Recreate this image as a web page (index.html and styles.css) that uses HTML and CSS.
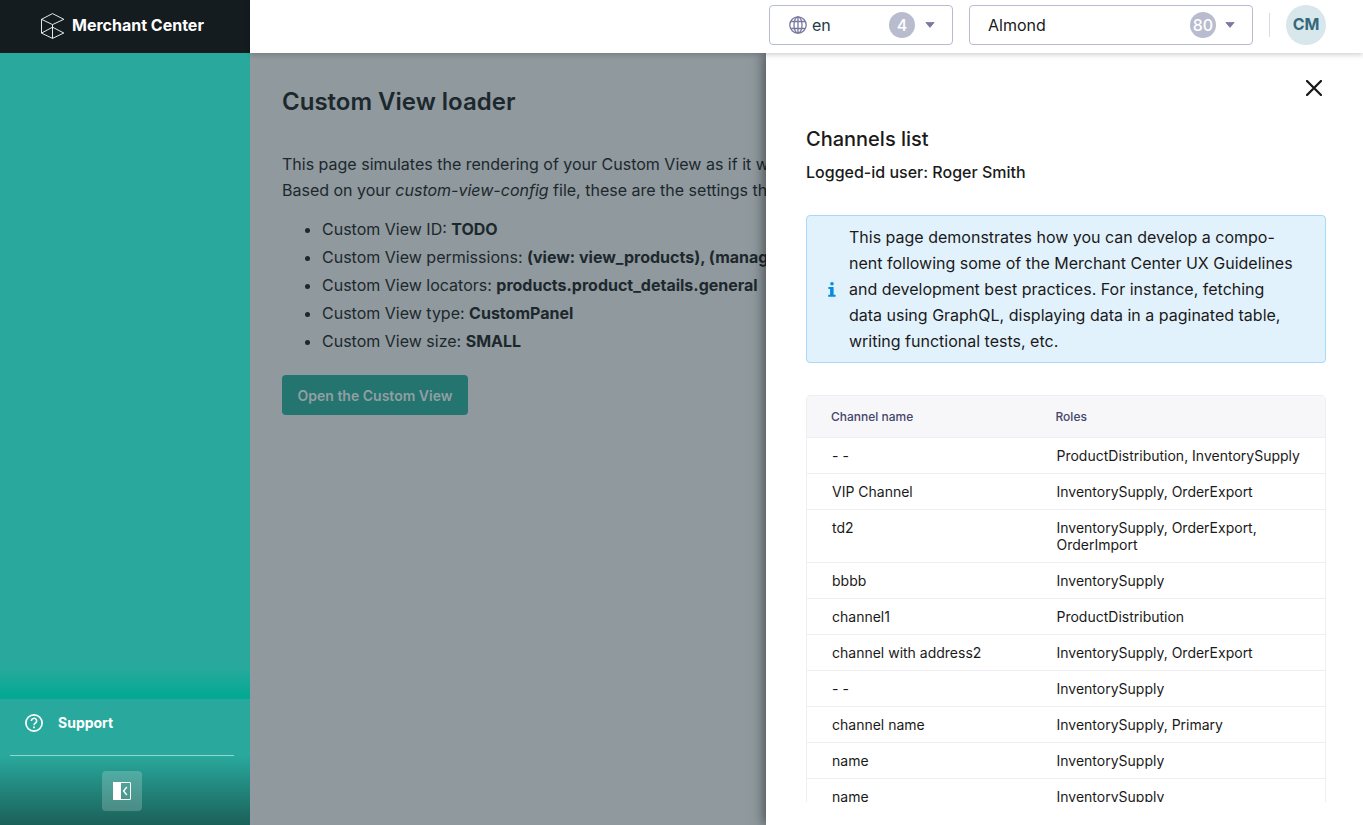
FILE: index.html
```html
<!DOCTYPE html>
<html lang="en">
<head>
<meta charset="utf-8">
<title>Merchant Center</title>
<link rel="stylesheet" href="styles.css">
</head>
<body>
<div class="app">
  <aside class="sidebar">
    <div class="brand">
      <svg class="brand-logo" width="24" height="26" viewBox="0 0 24 26" fill="none" stroke="#fff" stroke-width=".9"><path d="M11.5 .6 22.8 6.3 11.5 11.6.5 6.3zM.5 6.3v13.8L11.5 25.4 22.8 20 11.5 14.2.5 20.1M11.5 11.6v13.8"/></svg>
      <span>Merchant Center</span>
    </div>
    <nav class="nav">
      <div class="nav-shade"></div>
      <a class="support">
        <svg width="18" height="18" viewBox="0 0 18 18" fill="none" stroke="#fff" stroke-width="1.7"><circle cx="9" cy="9" r="8.1"/><path d="M6.4 7a2.6 2.6 0 1 1 3.9 2.2C9.3 9.8 9 10.2 9 11.2" stroke-width="1.5"/><path d="M9 12.6v1.6"/></svg>
        <span>Support</span>
      </a>
      <div class="collapse">
        <button class="collapse-button" aria-label="Collapse menu">
          <svg width="18" height="18" viewBox="0 0 18 18"><rect x=".5" y=".5" width="17" height="17" rx=".5" fill="none" stroke="#fff"/><path d="M0 0h8v18H0z" fill="#fff"/><path d="M13.8 5 10.6 9l3.2 4" fill="none" stroke="#fff" stroke-width="1.4"/></svg>
        </button>
      </div>
    </nav>
  </aside>
  <div class="content">
    <header class="topbar">
      <div class="select select-locale">
        <svg width="18" height="18" viewBox="0 0 18 18" fill="none" stroke="#7878a0" stroke-width="1.3"><circle cx="9" cy="9" r="8.2"/><ellipse cx="9" cy="9" rx="4" ry="8.2"/><path d="M9 .8v16.4M2 5.5h14M2 12.5h14"/></svg>
        <span class="select-value locale">en</span>
        <span class="count">4</span>
        <svg class="caret" width="10" height="6" viewBox="0 0 10 6"><path d="M.8.4h8.4L5 5.4z" fill="#7878a0" stroke="#7878a0" stroke-width=".8" stroke-linejoin="round"/></svg>
      </div>
      <div class="select select-project">
        <span class="select-value">Almond</span>
        <span class="count">80</span>
        <svg class="caret" width="10" height="6" viewBox="0 0 10 6"><path d="M.8.4h8.4L5 5.4z" fill="#7878a0" stroke="#7878a0" stroke-width=".8" stroke-linejoin="round"/></svg>
      </div>
      <div class="divider"></div>
      <div class="avatar">CM</div>
    </header>
    <div class="stage">
      <main class="page">
        <h1 class="page-title">Custom View loader</h1>
        <p class="intro">This page simulates the rendering of your Custom View as if it w<br>Based on your <em>custom-view-config</em> file, these are the settings th</p>
        <ul class="settings">
          <li>Custom View ID: <b>TODO</b></li>
          <li>Custom View permissions: <b>(view: view_products), (manag</b></li>
          <li>Custom View locators: <b>products.product_details.general</b></li>
          <li>Custom View type: <b>CustomPanel</b></li>
          <li>Custom View size: <b>SMALL</b></li>
        </ul>
        <button class="open-button">Open the Custom View</button>
      </main>
      <section class="panel">
        <div class="panel-top">
          <svg class="close" width="16" height="16" viewBox="0 0 16 16"><path d="m1 1 14 14M15 1 1 15" stroke="#1a1a1a" stroke-width="2.3" stroke-linecap="round"/></svg>
        </div>
        <div class="panel-body">
          <h2 class="panel-title">Channels list</h2>
          <h3 class="panel-subtitle">Logged-id user: Roger Smith</h3>
          <div class="notice">
            <svg class="info" width="8" height="15" viewBox="0 0 8 15" fill="#078cdf"><circle cx="4" cy="1.8" r="1.8"/><path d="M.4 5h5.2v7.8h2v2H.2v-2h1.9V7H.4z"/></svg>
            <p class="notice-text">This page demonstrates how you can develop a compo-<br>nent following some of the Merchant Center UX Guidelines<br>and development best practices. For instance, fetching<br>data using GraphQL, displaying data in a paginated table,<br>writing functional tests, etc.</p>
          </div>
          <div class="table">
            <div class="row head"><span>Channel name</span><span>Roles</span></div>
            <div class="row"><span>- -</span><span>ProductDistribution, InventorySupply</span></div>
            <div class="row"><span>VIP Channel</span><span>InventorySupply, OrderExport</span></div>
            <div class="row"><span>td2</span><span>InventorySupply, OrderExport, OrderImport</span></div>
            <div class="row"><span>bbbb</span><span>InventorySupply</span></div>
            <div class="row"><span>channel1</span><span>ProductDistribution</span></div>
            <div class="row"><span>channel with address2</span><span>InventorySupply, OrderExport</span></div>
            <div class="row"><span>- -</span><span>InventorySupply</span></div>
            <div class="row"><span>channel name</span><span>InventorySupply, Primary</span></div>
            <div class="row"><span>name</span><span>InventorySupply</span></div>
            <div class="row"><span>name</span><span>InventorySupply</span></div>
          </div>
        </div>
      </section>
    </div>
  </div>
</div>
</body>
</html>
```
FILE: styles.css
```css
* { box-sizing: border-box; }
body { margin: 0; font-family: Inter, "Liberation Sans", sans-serif; font-size: 16px; color: #1a1a1a; }
h1, h2, h3, p, ul { margin: 0; }
svg { display: block; flex: none; }
.app { display: flex; width: 100%; height: 100vh; overflow: hidden; }

.sidebar { display: flex; flex-direction: column; width: 250px; flex: none; color: #fff; }
.brand { display: flex; align-items: center; gap: 7px; height: 53px; padding: 0 0 1px 41px; background: #141c1f; font-weight: 700; font-size: 16px; }
.brand span { padding-bottom: 2px; }
.nav { display: flex; flex-direction: column; flex: 1; background: #29a99d; }
.nav-shade { height: 32px; margin-top: auto; background: linear-gradient(#29a99d, #00a993); }
.support { display: flex; align-items: center; gap: 15px; height: 56px; padding: 0 0 8px 25px; font-weight: 700; font-size: 14px; }
.support span { padding-bottom: 1px; }
.collapse { display: flex; justify-content: center; height: 70px; padding: 16px 6px 0 0; background: linear-gradient(#29a99d, #1b6059); position: relative; }
.collapse::before { content: ""; position: absolute; top: 0; left: 10px; width: 224px; height: 1px; background: #94d4ce; }
.collapse-button { display: flex; align-items: center; justify-content: center; width: 40px; height: 40px; padding: 0; border: 0; border-radius: 4px; background: rgba(255, 255, 255, .2); }

.content { display: flex; flex-direction: column; flex: 1; min-width: 0; }
.topbar { display: flex; align-items: center; justify-content: flex-end; height: 53px; padding: 0 37px 3px 0; background: #fff; position: relative; z-index: 2; box-shadow: 0 2px 5px rgba(0, 0, 0, .18); }
.select { display: flex; align-items: center; height: 40px; margin-right: 16px; padding: 0 17px 0 18px; border: 1px solid #b8bbd0; border-radius: 4px; }
.select-locale { width: 184px; padding-left: 19px; }
.select-project { width: 284px; }
.select-value { flex: 1; }
.locale { margin-left: 5px; color: #213c45; }
.count { display: flex; align-items: center; justify-content: center; width: 26px; height: 26px; border-radius: 50%; background: #b9bccf; color: #fff; font-weight: 500; }
.caret { margin-left: 10px; }
.select-project .caret { margin-left: 9px; }
.divider { width: 1px; height: 24px; margin-right: 16px; background: #d8dae5; }
.avatar { display: flex; align-items: center; justify-content: center; width: 40px; height: 40px; padding-bottom: 2px; border-radius: 50%; background: #d8e7eb; color: #33697a; font-weight: 700; font-size: 16px; }

.stage { position: relative; flex: 1; min-height: 0; overflow: hidden; background: #8f999e; }
.page { padding: 33px 32px 32px; color: #1d282d; }
.page-title { font-size: 24px; line-height: 32px; font-weight: 600; }
.intro { margin-top: 33px; line-height: 26px; white-space: nowrap; }
.settings { margin-top: 12px; padding-left: 40px; line-height: 28px; white-space: nowrap; }
.settings b { font-weight: 700; }
.open-button { display: block; width: 186px; height: 40px; margin-top: 20px; padding: 1px 0 0; border: 0; border-radius: 4px; background: #247470; color: #929fa3; font: 600 14px Inter, sans-serif; }

.panel { position: absolute; top: 0; right: 0; bottom: 0; width: 597px; display: flex; flex-direction: column; background: #fff; box-shadow: -2px 0 12px rgba(0, 0, 0, .5); }
.panel-top { display: flex; justify-content: flex-end; padding: 27px 41px 0 0; }
.panel-body { flex: 1; min-height: 0; overflow: hidden; margin: 31px 37px 23px 40px; }
.panel-title { font-size: 20px; line-height: 24px; font-weight: 500; }
.panel-subtitle { margin-top: 11px; font-size: 16px; line-height: 20px; font-weight: 500; }
.notice { display: flex; align-items: center; gap: 13px; height: 148px; margin-top: 33px; padding-left: 21px; border: 1px solid #a7daf8; border-radius: 4px; background: #e2f2fd; }
.notice-text { line-height: 26px; white-space: nowrap; }
.table { margin-top: 32px; border: 1px solid #eeeef3; border-radius: 4px 4px 0 0; font-size: 14px; line-height: 17px; }
.row { display: grid; grid-template-columns: 224px 1fr; padding: 9px 24px 9px 25px; border-bottom: 1px solid #eeeef3; }
.row span + span { padding-left: .5px; }
.head { height: 42px; padding: 12px 24px 0; background: #f7f7fa; color: #45456a; font-size: 12px; font-weight: 500; }
```
